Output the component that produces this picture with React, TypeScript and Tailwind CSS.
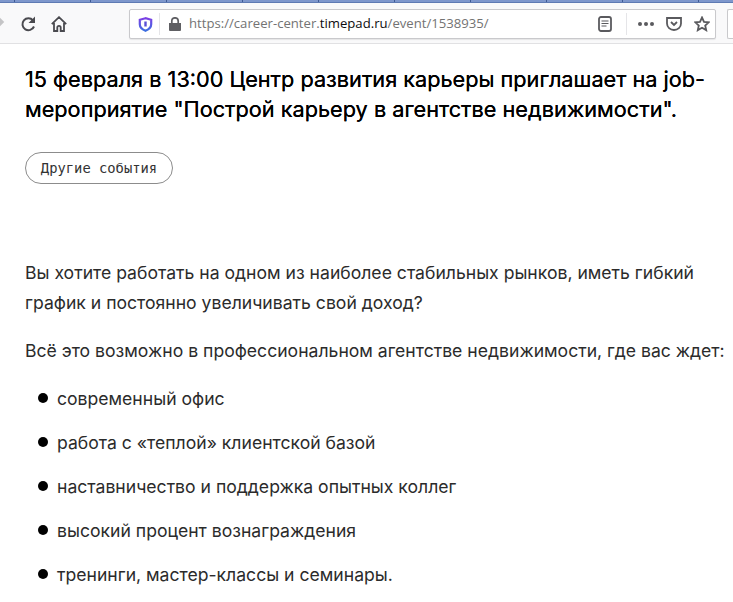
const sans = 'font-["Inter","Liberation_Sans",Arial,sans-serif]'

function Reload() {
  return (
    <svg className="size-[16px]" viewBox="0 0 16 16" fill="none" stroke="#4a4a4f" strokeWidth="2">
      <path d="M14 10.500A6 6 0 1 1 13 4.300" />
      <path d="M15 .5v6.500H8.500z" fill="#4a4a4f" stroke="none" />
    </svg>
  )
}

function Home() {
  return (
    <svg className="size-[16px]" viewBox="0 0 16 16" fill="none" stroke="#4a4a4f" strokeWidth="1.800">
      <path d="M.8 8.200 8 1.200l7.200 7M3 7v8h3.300v-3.500a1.700 1.700 0 0 1 3.400 0V15H13V7" />
    </svg>
  )
}

function Toolbar() {
  return (
    <div className="h-[44px] bg-[#f9f9fa] border-b border-[#e1e1e3] flex flex-col">
      <div className="h-[3px] bg-[#7e97cc] border-b border-[#5e7ab3] flex pl-[14px] gap-[75px] shrink-0">
        {Array.from({ length: 10 }, (_, i) => (
          <span key={i} className="w-px h-full bg-[#3f5a94]" />
        ))}
      </div>
      <div className="flex items-center flex-1 pt-[2px] relative">
        <span className="absolute left-[-3px] top-[16px] size-[6px] rotate-45 bg-[#c4c4c6]" />
        <div className="ml-[20px]">
          <Reload />
        </div>
        <div className="ml-[15px]">
          <Home />
        </div>
        <div className="ml-[62px] h-[30px] w-[587px] bg-white border border-[#c9c9cc] rounded-[2px] flex items-center shrink-0 shadow-[0_1px_1px_rgba(0,0,0,0.08)]">
          <svg className="ml-[8px] size-[15px]" viewBox="0 0 15 15">
            <defs>
              <linearGradient id="shield" x1="0" y1="0" x2="0" y2="1">
                <stop offset="0" stopColor="#7b3fe4" />
                <stop offset="1" stopColor="#3c6fe0" />
              </linearGradient>
            </defs>
            <path d="M7.500 1.200 1.800 2.800v4.400c0 3.200 2.700 5.300 5.700 6.600 3-1.300 5.700-3.400 5.700-6.600V2.800z" fill="none" stroke="url(#shield)" strokeWidth="2.200" />
            <path d="M7.500 4.500v5" stroke="#5a4fd6" strokeWidth="2.400" />
          </svg>
          <div className="ml-[6px] h-[22px] w-px bg-[#e5e5e8]" />
          <svg className="ml-[8px] size-[14px]" viewBox="0 0 14 14" fill="#5f5f63">
            <path d="M1 6h12v7a1 1 0 0 1-1 1H2a1 1 0 0 1-1-1z" />
            <path d="M3.800 6V4a3.200 3.200 0 0 1 6.400 0v2" fill="none" stroke="#5f5f63" strokeWidth="1.700" />
          </svg>
          <span className='font-["Open_Sans",sans-serif] ml-[7px] text-[13.150px] text-[#737373] whitespace-nowrap'>
            https://career-center.<span className="text-[#0c0c0d]">timepad.ru</span>/event/1538935/
          </span>
          <div className="ml-auto flex items-center">
            <svg className="w-[14px] h-[16px]" viewBox="0 0 14 16" fill="none" stroke="#5a5a5e" strokeWidth="1.800">
              <rect x="1" y="1" width="12" height="14" rx="2" />
              <path d="M3.500 5h7M3.500 7.500h7M3.500 10h5" strokeWidth="1.100" />
            </svg>
            <div className="ml-[14px] h-[22px] w-px bg-[#e5e5e8]" />
            <span className="ml-[11px] flex gap-[2px]">
              <span className="size-[4px] rounded-full bg-[#5a5a5e]" />
              <span className="size-[4px] rounded-full bg-[#5a5a5e]" />
              <span className="size-[4px] rounded-full bg-[#5a5a5e]" />
            </span>
            <svg className="ml-[12px] size-[16px]" viewBox="0 0 16 16" fill="none" stroke="#5a5a5e" strokeWidth="1.800">
              <path d="M1 2h14v5.500a7 6.500 0 0 1-14 0z" />
              <path d="m5 6 3 3 3-3" />
            </svg>
            <svg className="ml-[12px] mr-[5px] size-[16px]" viewBox="0 0 16 16" fill="none" stroke="#5a5a5e" strokeWidth="1.800">
              <path d="m8 1.500 2 4.300 4.700.5-3.500 3.200 1 4.600L8 11.700l-4.200 2.400 1-4.600L1.300 6.300 6 5.800z" />
            </svg>
          </div>
        </div>
        <div className="ml-[11px] h-[30px] flex-1 bg-white border border-[#c9c9cc] rounded-l-[2px] border-r-0" />
      </div>
    </div>
  )
}

const items = [
  'современный офис',
  'работа с «теплой» клиентской базой',
  'наставничество и поддержка опытных коллег',
  'высокий процент вознаграждения',
  'тренинги, мастер-классы и семинары.',
]

export default function App() {
  return (
    <div className={`${sans} h-[602px] w-[733px] overflow-hidden bg-white`}>
      <Toolbar />
      <main className="pl-[25px]">
        <h1 className="mt-[20px] w-[700px] text-[21.700px] leading-[30px] font-normal text-black [text-shadow:0_0_0.4px_#000]">
          15 февраля в 13:00 Центр развития карьеры приглашает на job-мероприятие "Построй карьеру в агентстве недвижимости".
        </h1>
        <button className='mt-[28px] h-[32px] w-[148px] rounded-full border border-[#8c8c8c] text-[13.800px] text-[#333] font-["DejaVu_Sans_Mono",monospace]'>
          Другие события
        </button>
        <p className="mt-[74px] text-[17.600px] leading-[30px] text-[#2b2b2b] w-[690px]">
          Вы хотите работать на одном из наиболее стабильных рынков, иметь гибкий график и постоянно увеличивать свой доход?
        </p>
        <p className="mt-[18px] text-[17.600px] leading-[30px] text-[#2b2b2b] whitespace-nowrap">
          Всё это возможно в профессиональном агентстве недвижимости, где вас ждет:
        </p>
        <ul className="mt-[18px]">
          {items.map((item) => (
            <li key={item} className="flex items-center h-[30px] mb-[14px] text-[17.600px] text-[#2b2b2b]">
              <span className="ml-[13px] mr-[9px] mt-[-2px] size-[10px] rounded-full bg-black" />
              {item}
            </li>
          ))}
        </ul>
      </main>
    </div>
  )
}
